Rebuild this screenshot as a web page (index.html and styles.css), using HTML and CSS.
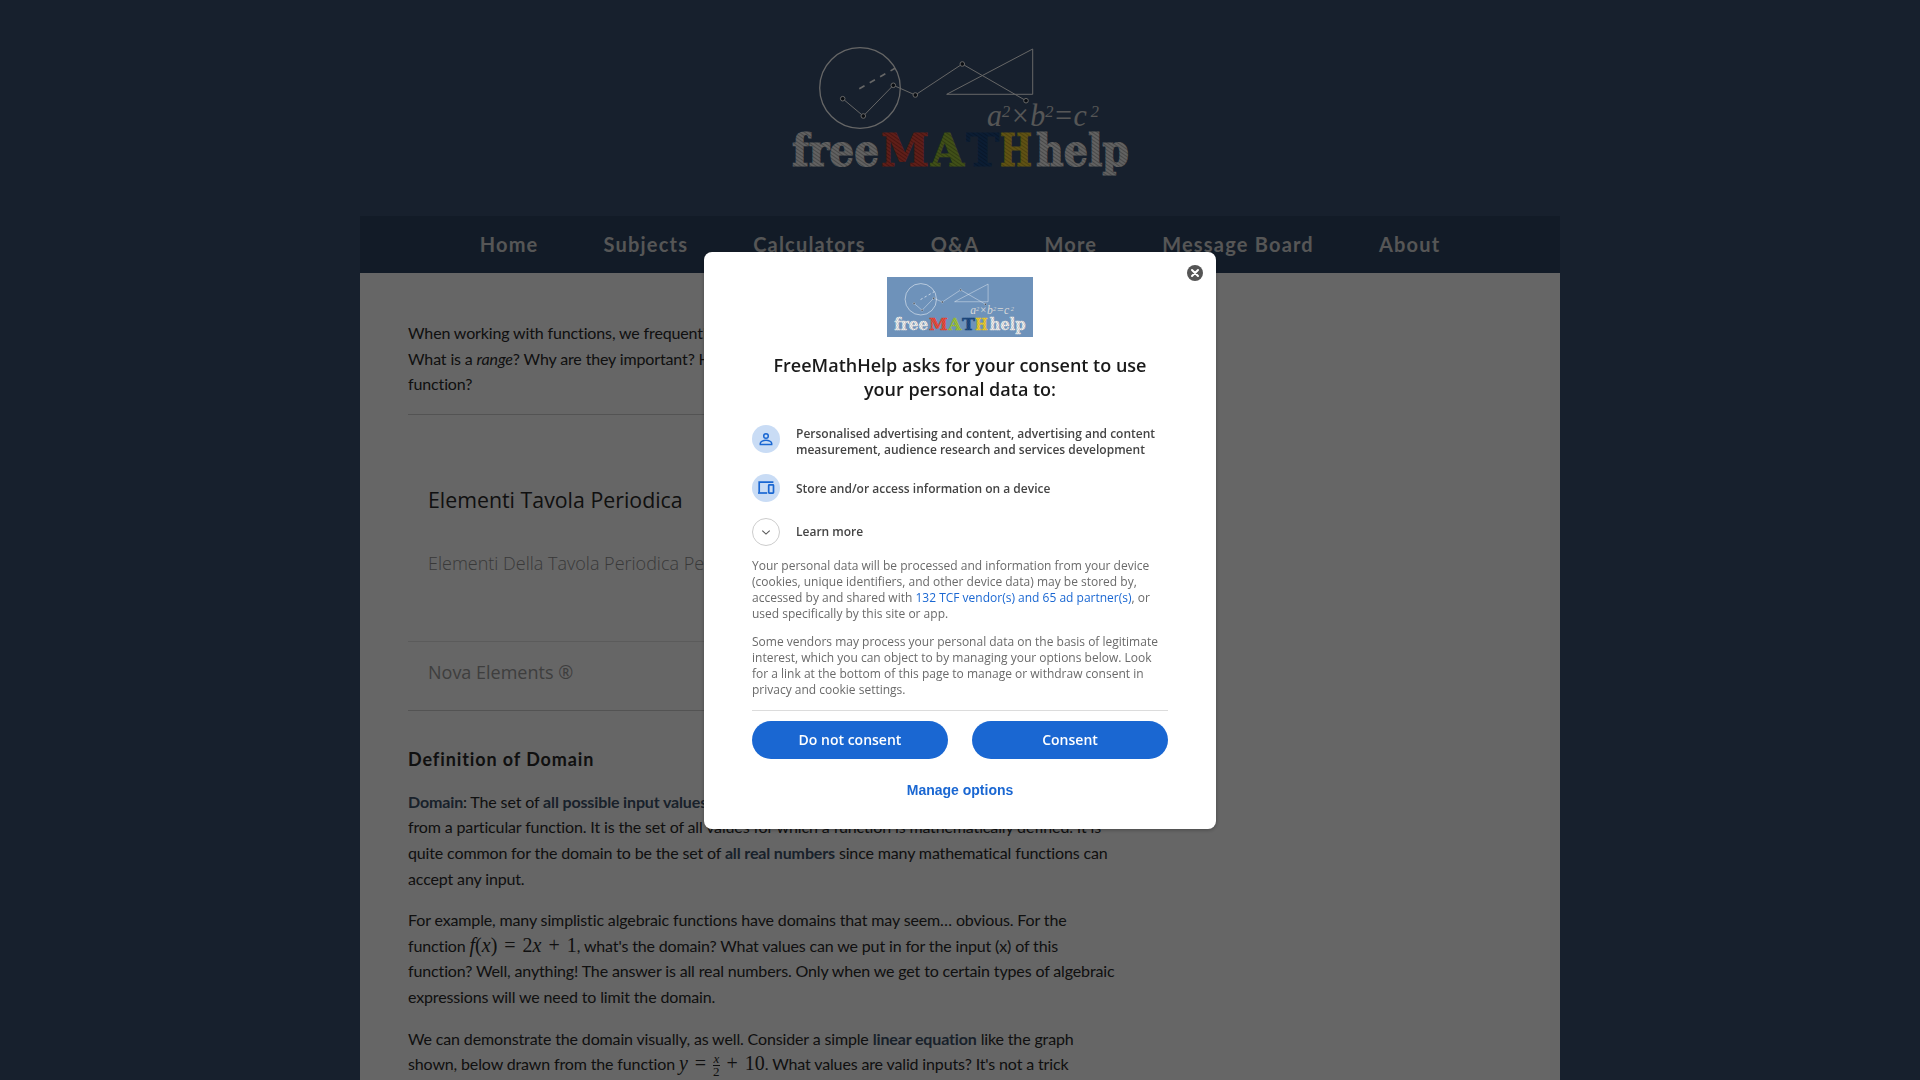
FILE: index.html
```html
<!DOCTYPE html>
<html lang="en">
<head>
<meta charset="utf-8">
<title>Domain and Range - FreeMathHelp</title>
<link rel="stylesheet" href="styles.css">
</head>
<body>
<svg class="defs" width="0" height="0" aria-hidden="true">
  <defs>
    <pattern id="h-grey" width="3" height="3" patternUnits="userSpaceOnUse" patternTransform="rotate(35)"><rect width="3" height="3" fill="#f4f4f4"/><rect width="3" height="1" fill="#b8b8b8"/></pattern>
    <pattern id="h-red" width="3" height="3" patternUnits="userSpaceOnUse" patternTransform="rotate(35)"><rect width="3" height="3" fill="#ee4f40"/><rect width="3" height="1" fill="#b8332a"/></pattern>
    <pattern id="h-green" width="3" height="3" patternUnits="userSpaceOnUse" patternTransform="rotate(35)"><rect width="3" height="3" fill="#a3c83e"/><rect width="3" height="1" fill="#7c9a2c"/></pattern>
    <pattern id="h-navy" width="3" height="3" patternUnits="userSpaceOnUse" patternTransform="rotate(35)"><rect width="3" height="3" fill="#1d4a82"/><rect width="3" height="1" fill="#163a68"/></pattern>
    <pattern id="h-yellow" width="3" height="3" patternUnits="userSpaceOnUse" patternTransform="rotate(35)"><rect width="3" height="3" fill="#efcf34"/><rect width="3" height="1" fill="#c2a626"/></pattern>
    <symbol id="logo" viewBox="0 0 400 170">
      <g fill="none" stroke="#fff" stroke-width="1">
        <circle cx="100" cy="68" r="40.3" stroke-width="1.3"/>
        <path d="M99.3 68.7 135 48.3" stroke-width="1.6" stroke-dasharray="6 6"/>
        <path d="M82.7 78.7 103.3 96 133.3 65.3 155.3 75 202.3 44 266 80.7"/>
        <path d="M186.7 74.3 272.7 29V74.3Z"/>
        <g fill="#18212e">
          <circle cx="82.7" cy="78.7" r="2.3"/>
          <circle cx="103.3" cy="96" r="2.3"/>
          <circle cx="133.3" cy="65.3" r="2.3"/>
          <circle cx="155.3" cy="75" r="2.3"/>
          <circle cx="202.3" cy="44" r="2.3"/>
          <circle cx="266" cy="80.7" r="2.3"/>
        </g>
      </g>
      <text class="logo-eq" x="227" y="106" textLength="112" lengthAdjust="spacingAndGlyphs">a<tspan dy="-9" font-size="17">2</tspan><tspan dy="9">×b</tspan><tspan dy="-9" font-size="17">2</tspan><tspan dy="9">=c</tspan><tspan dy="-9" font-size="17"> 2</tspan></text>
      <g class="logo-word">
        <text x="32" y="146" textLength="87" lengthAdjust="spacingAndGlyphs" fill="url(#h-grey)" stroke="url(#h-grey)">free</text>
        <text x="121" y="146" textLength="48" lengthAdjust="spacingAndGlyphs" fill="url(#h-red)" stroke="url(#h-red)">M</text>
        <text x="171" y="146" textLength="33" lengthAdjust="spacingAndGlyphs" fill="url(#h-green)" stroke="url(#h-green)">A</text>
        <text x="206" y="146" textLength="33" lengthAdjust="spacingAndGlyphs" fill="url(#h-navy)" stroke="url(#h-navy)">T</text>
        <text x="240" y="146" textLength="32" lengthAdjust="spacingAndGlyphs" fill="url(#h-yellow)" stroke="url(#h-yellow)">H</text>
        <text x="276" y="146" textLength="93" lengthAdjust="spacingAndGlyphs" fill="url(#h-grey)" stroke="url(#h-grey)">help</text>
      </g>
    </symbol>
  </defs>
</svg>

<div class="page">
  <header class="site-header">
    <svg class="site-logo" viewBox="0 0 400 170" role="img" aria-label="freeMATHhelp"><use href="#logo"/></svg>
  </header>
  <nav class="site-nav">
    <a>Home</a><a>Subjects</a><a>Calculators</a><a>Q&amp;A</a><a>More</a><a>Message Board</a><a>About</a>
  </nav>
  <main class="content">
    <p>When working with functions, we frequently talk about their domain and range. What is a <em>domain</em>?<br>
    What is a <em>range</em>? Why are they important? How do we find the domain and range of a<br>
    function?</p>
    <hr class="rule">
    <section class="ad">
      <h3 class="ad-title">Elementi Tavola Periodica</h3>
      <p class="ad-sub">Elementi Della Tavola Periodica Per Ricerca E Industria</p>
      <p class="ad-foot">Nova Elements ®</p>
    </section>
    <h2 class="section-title">Definition of Domain</h2>
    <p><a class="strong">Domain</a>: The set of <a class="strong">all possible input values</a> (usually x) which can be entered into and<br>
    from a particular function. It is the set of all values for which a function is mathematically defined. It is<br>
    quite common for the domain to be the set of <a class="strong">all real numbers</a> since many mathematical functions can<br>
    accept any input.</p>
    <p>For example, many simplistic algebraic functions have domains that may seem… obvious. For the<br>
    function <span class="math"><i>f</i>(<i>x</i>) = 2<i>x</i> + 1</span>, what's the domain? What values can we put in for the input (x) of this<br>
    function? Well, anything! The answer is all real numbers. Only when we get to certain types of algebraic<br>
    expressions will we need to limit the domain.</p>
    <p>We can demonstrate the domain visually, as well. Consider a simple <a class="strong">linear equation</a> like the graph<br>
    shown, below drawn from the function <span class="math"><i>y</i> = <span class="frac"><i>x</i><span>2</span></span> + 10</span>. What values are valid inputs? It's not a trick</p>
  </main>
</div>

<div class="overlay">
  <div class="dialog">
    <button class="close" aria-label="Close">
      <svg viewBox="0 0 16 16" width="16" height="16"><circle cx="8" cy="8" r="8" fill="#555"/><path d="M5 5l6 6M11 5l-6 6" stroke="#fff" stroke-width="2" stroke-linecap="round"/></svg>
    </button>
    <svg class="dialog-logo" viewBox="13.6 10.8 374 154" role="img" aria-label="freeMATHhelp"><use href="#logo" x="0" y="0" width="400" height="170"/></svg>
    <h1 class="dialog-title">FreeMathHelp asks for your consent to use your personal data to:</h1>
    <ul class="purposes">
      <li class="purpose purpose-long">
        <span class="badge"><svg viewBox="0 0 28 28" width="28" height="28" fill="none" stroke="#1a67d2" stroke-width="1.5"><circle cx="14" cy="11" r="2.3"/><path d="M8.3 19.4v-1.2c0-1.8 3.2-2.9 5.7-2.9s5.7 1.1 5.7 2.9v1.2z"/></svg></span>
        <span class="purpose-text">Personalised advertising and content, advertising and content<br>measurement, audience research and services development</span>
      </li>
      <li class="purpose">
        <span class="badge"><svg viewBox="0 0 28 28" width="28" height="28" fill="none" stroke="#1a67d2" stroke-width="1.7"><path d="M7.2 18.5V8.2h14.2"/><path d="M6 19h9.2"/><rect x="16.7" y="10.8" width="4.8" height="8.4" rx=".6"/></svg></span>
        <span class="purpose-text-mid">Store and/or access information on a device</span>
      </li>
      <li class="purpose">
        <span class="badge badge-plain"><svg viewBox="0 0 28 28" width="26" height="26" fill="none" stroke="#555" stroke-width="1.2"><path d="M10 12.5l4 3.7 4-3.7"/></svg></span>
        <span>Learn more</span>
      </li>
    </ul>
    <p class="notice">Your personal data will be processed and information from your device (cookies, unique identifiers, and other device data) may be stored by, accessed by and shared with <a>132 TCF vendor(s) and 65 ad partner(s)</a>, or used specifically by this site or app.</p>
    <p class="notice">Some vendors may process your personal data on the basis of legitimate interest, which you can object to by managing your options below. Look for a link at the bottom of this page to manage or withdraw consent in privacy and cookie settings.</p>
    <div class="actions">
      <button class="btn">Do not consent</button>
      <button class="btn">Consent</button>
    </div>
    <button class="manage">Manage options</button>
  </div>
</div>
</body>
</html>
```
FILE: styles.css
```css
* { box-sizing: border-box; }
html, body { margin: 0; height: 100%; overflow: hidden; }
body { background: #3b5272; font-family: "Noto Sans", "Open Sans", sans-serif; }
.defs { position: absolute; }

.page { width: 1200px; margin: 0 auto; }
.site-header { height: 216px; padding-top: 20px; display: flex; justify-content: center; }
.site-logo { width: 400px; height: 170px; display: block; }
.logo-eq { font-family: "Liberation Serif", serif; font-style: italic; font-size: 31px; fill: #d8d8d8; }
.logo-word { font-family: "DejaVu Serif", serif; font-weight: 700; font-size: 44px; stroke-width: 1.2; }

.site-nav { height: 57px; padding-bottom: 2px; background: #2e4562; display: flex; justify-content: center; align-items: center; gap: 65px; }
.site-nav a { font-family: "Lato", sans-serif; font-weight: 700; font-size: 20px; letter-spacing: 1.2px; color: #d6d6d6; }

.content { background: #fff; height: 900px; padding: 47px 48px 0; color: #2a2a2a; font-family: "Lato", sans-serif; font-size: 16px; letter-spacing: -.14px; line-height: 25.6px; white-space: nowrap; }
.content p { margin: 0 0 16px; }
.rule { border: 0; border-top: 1px solid #cfcfcf; margin: 17px 0 0; width: 712px; }
.strong { font-weight: 700; color: #40546c; }

.ad { width: 712px; height: 296px; padding: 69px 20px 0; font-family: "Open Sans", sans-serif; letter-spacing: 0; border-bottom: 1px solid #cfcfcf; }
.content .ad-title { margin: 0; font-size: 21.33px; font-weight: 400; line-height: 32px; color: #2a2a2a; }
.content .ad-sub { margin: 31px 0 0; font-size: 18px; font-weight: 300; line-height: 32px; color: #8f8f8f; height: 94px; overflow: hidden; }
.content .ad-foot { margin: 0 -20px; padding: 14px 20px 0; font-size: 18px; font-weight: 400; line-height: 32px; color: #9c9c9c; border-top: 1px solid #e4e4e4; }

.section-title { margin: 35px 0 17px; font-family: "Lato", sans-serif; font-size: 18px; font-weight: 700; letter-spacing: .9px; line-height: 26px; color: #2a2a2a; }

.math { font-family: "Liberation Serif", serif; font-size: 20px; word-spacing: 2px; letter-spacing: 0; line-height: 0; }
.frac { display: inline-flex; flex-direction: column; vertical-align: middle; font-size: 13px; line-height: 12px; text-align: center; }
.frac span { border-top: 1px solid currentColor; }

.overlay { position: fixed; inset: 0; background: rgba(0, 0, 0, .6); display: flex; align-items: center; justify-content: center; }
.dialog { position: relative; width: 512px; height: 577px; padding: 25px 48px 0; background: #fff; border-radius: 8px; box-shadow: 0 1px 4px rgba(0, 0, 0, .3); font-family: "Open Sans", sans-serif; display: flex; flex-direction: column; }
.close { position: absolute; top: 13px; right: 13px; width: 16px; height: 16px; padding: 0; border: 0; background: none; }
.close svg { display: block; }
.dialog-logo { width: 146px; height: 60px; background: #6e92ba; align-self: center; flex: none; }
.dialog-title { margin: 16px 0 0; padding: 0 10px; font-size: 18px; font-weight: 600; line-height: 24px; text-align: center; color: #1a1a1a; }
.purposes { list-style: none; margin: 24px 0 0; padding: 0; }
.purpose { display: flex; align-items: center; gap: 16px; min-height: 28px; margin-bottom: 16px; font-size: 12px; font-weight: 600; line-height: 16px; color: #444; }
.purpose-long .badge { align-self: flex-start; }
.purpose-text { padding-top: 1px; }
.purpose-text-mid { padding-top: 3px; }
.purpose:last-child { margin-bottom: 0; }
.badge { flex: none; width: 28px; height: 28px; border-radius: 50%; background: #c9dcf5; display: block; }
.badge svg { display: block; }
.badge-plain { background: #fff; border: 1px solid #ccc; }
.notice { margin: 12px 0 0; font-size: 12px; line-height: 16px; color: #6a6a6a; }
.notice + .notice { margin-top: 12px; }
.notice a { color: #1a67d2; }
.actions { margin-top: 12px; padding-top: 10px; border-top: 1px solid #dcdcdc; display: grid; grid-template-columns: 196px 196px; gap: 24px; }
.btn { height: 38px; border: 0; border-radius: 19px; background: #1a67d2; color: #fff; font-family: "Open Sans", sans-serif; font-size: 14px; font-weight: 600; }
.manage { margin-top: 21px; align-self: center; padding: 0; border: 0; background: none; color: #1a67d2; font-family: "Liberation Sans", sans-serif; font-size: 14px; font-weight: 700; line-height: 20px; }
```
